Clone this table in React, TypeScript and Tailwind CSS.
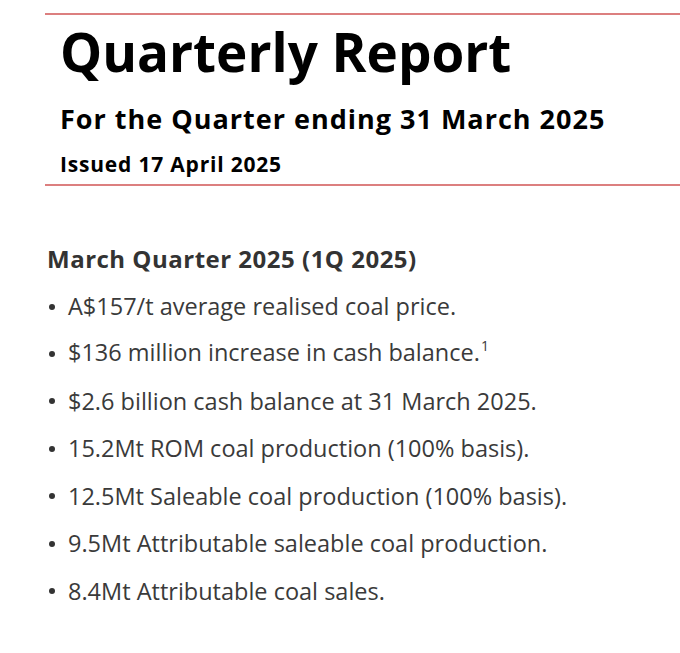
import React from "react";

const font = { fontFamily: "'Open Sans', 'Liberation Sans', sans-serif" };

const bullets: React.ReactNode[] = [
  "A$157/t average realised coal price.",
  <>
    $136 million increase in cash balance.
    <span className="text-[14px] relative -top-[10px] ml-[1px]">1</span>
  </>,
  "$2.6 billion cash balance at 31 March 2025.",
  "15.2Mt ROM coal production (100% basis).",
  "12.5Mt Saleable coal production (100% basis).",
  "9.5Mt Attributable saleable coal production.",
  "8.4Mt Attributable coal sales.",
];

export default function App() {
  return (
    <div className="w-[680px] h-[653px] bg-white overflow-hidden" style={font}>
      <div className="pl-[45px] pt-[13px]">
        <div className="h-[2px] bg-[#dc7f7f]" />
        <div className="pl-[15px]">
          <div className="text-[53px] font-bold leading-[60px] text-black mt-[7px]">Quarterly Report</div>
          <div className="text-[27px] font-bold leading-[34px] tracking-[1px] text-black mt-[20px]">
            For the Quarter ending 31 March 2025
          </div>
          <div className="text-[21px] font-bold leading-[26px] tracking-[0.8px] text-black mt-[15px]">
            Issued 17 April 2025
          </div>
        </div>
        <div className="h-[2px] bg-[#dc7f7f] mt-[7px]" />
        <div className="text-[24px] font-bold leading-[30px] tracking-[0.5px] text-[#333333] mt-[58px] pl-[2px]">
          March Quarter 2025 (1Q 2025)
        </div>
        <ul className="mt-[9px]">
          {bullets.map((b, i) => (
            <li key={i} className="flex items-center h-[47.4px] leading-[47px] text-[23.5px] text-[#3a3a3a]">
              <span className="w-[6px] h-[6px] rounded-full bg-[#333333] ml-[4px] mr-[13px] shrink-0" />
              <span className="whitespace-nowrap">{b}</span>
            </li>
          ))}
        </ul>
      </div>
    </div>
  );
}
